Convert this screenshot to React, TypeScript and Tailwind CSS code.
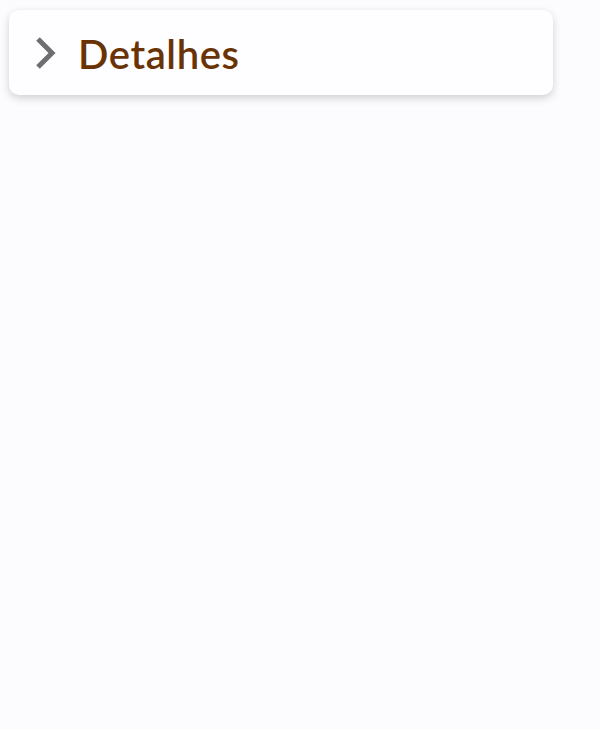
export default function App() {
    return (
        <div className="min-h-screen bg-[#fcfbfd] pt-[10px] pl-[9px]">
            <div className="w-[544px] h-[85px] rounded-[10px] bg-[#fefdff] shadow-[0_3px_8px_rgba(0,0,0,0.18)] flex items-center pl-[24px]">
                <svg width="26" height="34" viewBox="0 0 26 34" className="shrink-0">
                    <path d="M5 3 L19 17 L5 31" fill="none" stroke="#6e6e70" strokeWidth="5" />
                </svg>
                <h2
                    className="ml-[19px] text-[40px] text-[#6a3305] font-semibold leading-none mt-[2px] tracking-[0.6px]"
                    style={{ fontFamily: 'Lato, "Noto Sans", sans-serif' }}
                >
                    Detalhes
                </h2>
            </div>
        </div>
    );
}
